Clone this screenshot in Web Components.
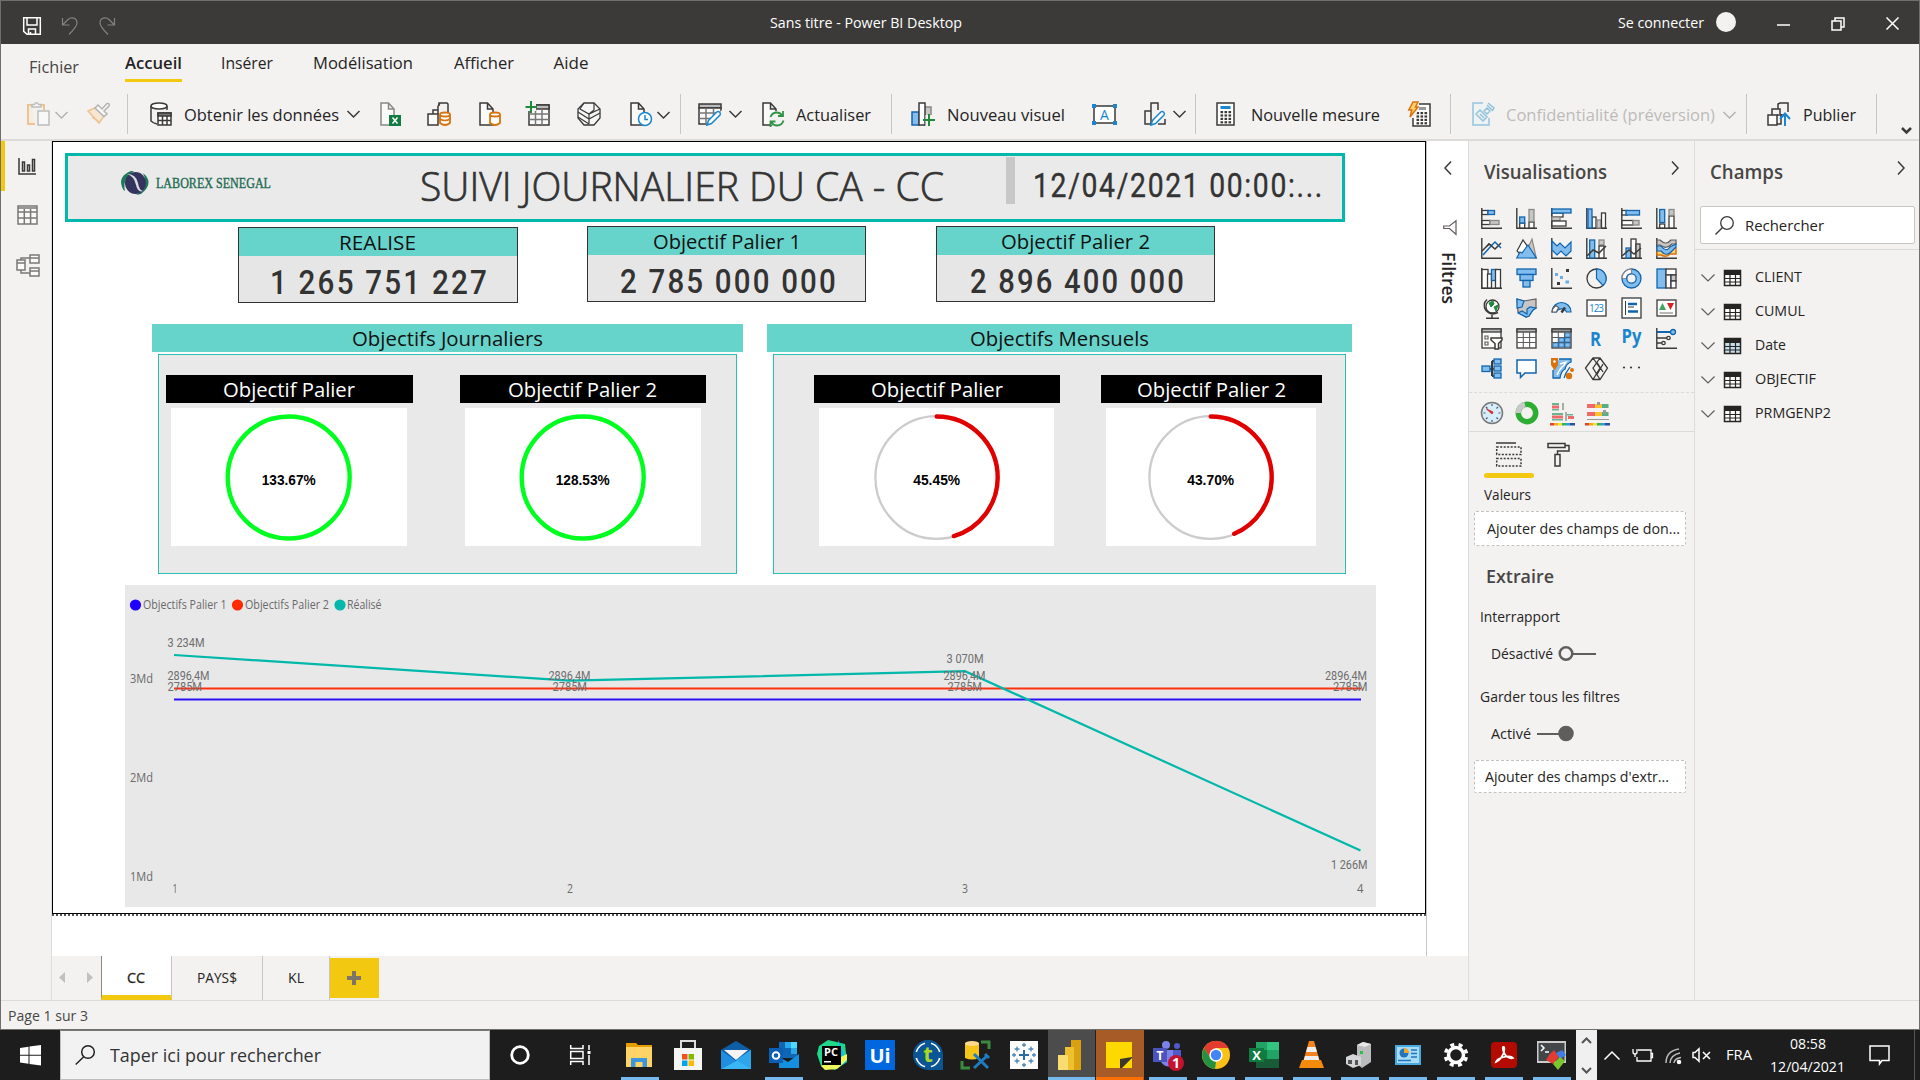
<!DOCTYPE html>
<html lang="fr">
<head>
<meta charset="utf-8">
<title>Sans titre - Power BI Desktop</title>
<style>
html,body{margin:0;padding:0;width:1920px;height:1080px;overflow:hidden;background:#1d1d1d;font-family:"Open Sans","Noto Sans",sans-serif}
body{display:flex;flex-direction:column}
</style>
</head>
<body>
<pbi-window></pbi-window>
<win-taskbar></win-taskbar>
<script>
const D='#3b3a39', B='#83bdee', S='#1065ae', G='#c8c6c4', Y='#f2c811';
const base='<style>*{box-sizing:border-box}svg{display:block;overflow:visible}.row{display:flex;align-items:center}.row>div{flex:none;display:flex}</style>';
function define(name, html, after){
  customElements.define(name, class extends HTMLElement{
    connectedCallback(){
      if(this.shadowRoot) return;
      const root=this.attachShadow({mode:'open'});
      const t=document.createElement('template');
      t.innerHTML=base+(typeof html==='function'?html(this):html);
      root.appendChild(t.content.cloneNode(true));
      if(after) after(this,root);
    }
  });
}
/* Horizontal run of items; gaps are derived from each item's start and width. */
function row(start, items){
  let p=start, s='';
  for(const [x,w,h,dy=0] of items){
    s+=`<div style="margin-left:${(x-p).toFixed(1)}px;width:${w}px;margin-top:${2*dy}px">${h}</div>`;
    p=x+w;
  }
  return `<div class="row">${s}</div>`;
}
const T=(w,s,t,st='')=>`<fit-text w="${w}" style="font-size:${s}px;${st}">${t}</fit-text>`;
const V=(w,h,c,a='')=>`<svg width="${w}" height="${h}" viewBox="0 0 ${w} ${h}" fill="none" stroke="${D}" stroke-width="1.5" ${a}>${c}</svg>`;
const R=(x,y,w,h,f='#fff',s=D)=>`<rect x="${x}" y="${y}" width="${w}" height="${h}" fill="${f}" stroke="${s}"/>`;
const P=(d,s=D,f='none',w=1.5)=>`<path d="${d}" stroke="${s}" fill="${f}" stroke-width="${w}"/>`;
const C=(x,y,r,f='none',s=D)=>`<circle cx="${x}" cy="${y}" r="${r}" fill="${f}" stroke="${s}"/>`;
const TX=(x,y,s,t,f,a='')=>`<text x="${x}" y="${y}" font-size="${s}" fill="${f}" stroke="none" text-anchor="middle" font-family="Open Sans" ${a}>${t}</text>`;
const chev=(c=D,w=1.5)=>V(13,8,P('M.5 1L6.5 7L12.5 1',c,'none',w));
const sep='<div style="width:1px;height:40px;background:#c8c6c4"></div>';

define('fit-text', e=>`<style>:host{display:block;flex:none;line-height:1;white-space:nowrap;width:${e.getAttribute('w')}px}span{display:inline-block;transform-origin:0 50%;line-height:1;vertical-align:top}</style><span><slot></slot></span>`,
 (e,r)=>{const s=r.querySelector('span');const n=s.getBoundingClientRect().width;if(n)s.style.transform=`scaleX(${e.getAttribute('w')/n})`;});

/* ---------- title bar ---------- */
define('pbi-titlebar', ()=>`<style>:host{display:block;height:43px;flex:none;background:#3b3a38;color:#fff}.row{height:43px}</style>`+row(1,[
 [23,18,V(18,18,P('M.7 .7H17.3V17.3H4L.7 14.3Z M4 1V8H14V1 M5.5 17V12H12.5V17 M7.5 15V17','#fff')),3.5],
 [61,18,V(18,18,P('M1.5 1V8H8.5 M1.5 8L7 2.5C10 -.3 16 .5 16 6C16 9 14 11.5 8 17.5','#85827f','none',1.2)),3],
 [98,18,V(18,18,P('M16.5 1V8H9.5 M16.5 8L11 2.5C8 -.3 2 .5 2 6C2 9 4 11.5 10 17.5','#85827f','none',1.2)),3],
 [770,192,T(192,14.5,'Sans titre - Power BI Desktop'),.7],
 [1618,86,T(86,14.5,'Se connecter'),.7],
 [1716,20,V(20,20,'<circle cx="10" cy="10" r="10" fill="#f3f2f1" stroke="none"/>'),-.5],
 [1777,13,V(13,2,P('M0 1H13','#fff')),2],
 [1831,14,V(14,14,P('M1 4H10V13H1Z M4 4V1H13V10H10','#fff')),1.5],
 [1886,13,V(13,13,P('M.5 .5L12.5 12.5M12.5 .5L.5 12.5','#fff')),1]
]));

/* ---------- ribbon ---------- */
const pageIco=(c=D)=>P('M2 1H9.5L15 7V23H2Z M9.5 1V7H15',c,'#fafafa');
const pencil=(x,y)=>`<g transform="translate(${x} ${y})">${P('M0 14L1.5 9.5L10 .8Q11.5 0 12.7 1.2Q14 2.5 13 4L4.5 12.5Z','#1a86d0','#fff',1.5)}</g>`;
const calc=(o=0)=>R(1+o,1,17-o/3,22,'#fff')+`<g stroke="none" fill="${D}">`+[0,1,2,3].map(j=>[0,1,2].map(i=>`<rect x="${4.5+o*.8+i*4}" y="${9+j*3.4}" width="2.6" height="2.2"/>`).join('')).join('')+'</g>';
const ribbonIcons={
 paste:V(23,24,`<g opacity=".5">${P('M5 3H1V22H8','#e8963a','#fbe8d0',2)}${P('M14 3H17V8','#e8963a','none',2)}${P('M5 5V2.5H7.5Q9.5 -1 11.5 2.5H14V5Z','#888','#fff')}${R(11,9,11,14,'#fff','#888')}</g>`),
 brush:V(23,23,`<g opacity=".5">${P('M1 9L8 6L17 14L12 21Z','#e8963a','#fbdcb5')}${P('M5 15L12 20','#e8963a')}${P('M8 6L11 3L15 7L20 1.5Q23 1 22 4L17 9L20 12L17 14.5Z','#777','#fff')}</g>`),
 db:V(23,24,P('M2 4V19Q4 21 8 22 M18 4V8')+`<ellipse cx="10" cy="4" rx="8" ry="3" fill="#fff"/>`+R(9,11,13,12)+`<rect x="9" y="11" width="13" height="3" fill="#777"/>`+P('M9 18.5H22M13.5 14V23M18 14V23')),
 excel:V(22,24,pageIco('#8a8886')+'<rect x="10" y="13" width="12" height="11" fill="#107c41" stroke="none"/>'+P('M13.5 15.5L18.5 21.5M18.5 15.5L13.5 21.5','#fff')),
 cubes:V(25,24,P('M11 12V4M6 12V8H11M12 4V1H20L21 2V10M11 4L13 1')+R(1,12,10,11,'#fafafa')+P('M13 13V21Q18 25 23 21V13','#d9730d','#fff',1.8)+'<ellipse cx="18" cy="12.5" rx="5" ry="2" fill="#fff" stroke="#d9730d" stroke-width="1.8"/>'+P('M13 17Q18 20 23 17','#d9730d')),
 pagedb:V(23,24,pageIco()+P('M12 13V21Q17 25 22 21V13','#d9730d','#fff',1.8)+'<ellipse cx="17" cy="12.5" rx="5" ry="2" fill="#fff" stroke="#d9730d" stroke-width="1.8"/>'),
 tableplus:V(24,24,R(3,3,20,20,'#fafafa')+'<rect x="9" y="3" width="14" height="4" fill="#bbb"/>'+P('M3 12H23M3 17.5H23M9.5 7V23M16 7V23','#777')+'<rect x="-1" y="-2" width="11" height="11" fill="#f3f2f1" stroke="none"/>'+P('M5 -1V11M-.5 5H11','#1f8a3b','none',2)),
 dataverse:V(24,24,P('M7 1H17L23 7V16L17 23H7L1 16V7Z',D,'#f6f6f6',1.3)+P('M7 1L3 7L12 12L23 7M1 10L12 17L23 11M1 15L12 22M12 12V22M17 1V8L12 12','#3b3a39','none',1.2)),
 recent:V(23,24,pageIco()+C(16,17,6.5,'#fff','#1a86d0')+P('M16 13V17.5H19','#1a86d0')),
 transform:V(25,24,R(1,2,22,4,'#bbb')+R(1,6,22,16,'#fafafa')+P('M1 11H23M1 16.5H23M8 6V22M15.5 6V22','#777')+'<path d="M9 23L24 8V24Z" fill="#f3f2f1" stroke="none"/>'+pencil(9,9)),
 refresh:V(24,24,pageIco()+'<circle cx="16" cy="17" r="8" fill="#f3f2f1" stroke="none"/>'+P('M9.5 15Q11 10.5 16 10.5Q19 10.5 21.5 13.5M22 9V14H17M22.5 18.5Q21 23.5 16 23.5Q12.5 23.5 10.5 20.5M9.5 25V19.5H14.5','#2e9444','none',1.8)),
 visual:V(24,24,R(1,10,7,13,B,S)+'<rect x="13" y="5" width="7" height="18" fill="#c8c6c4" stroke="#8a8886"/>'+R(8,1,6,22)+'<rect x="14.500" y="13" width="9.500" height="11" fill="#f3f2f1" stroke="none"/>'+P('M18 12V24M12 18H24','#1f8a3b','none',2)),
 textbox:V(25,21,R(2,2,21,17,'#fff')+`<g fill="#1a86d0" stroke="none"><rect width="4" height="4"/><rect x="21" width="4" height="4"/><rect y="17" width="4" height="4"/><rect x="21" y="17" width="4" height="4"/></g>`+TX(12.5,15.5,14,'A','#1a86d0')),
 shapes:V(24,24,P('M7 9H1V22H7M7 22V1H14V8M14 22H21V17',D,'none')+pencil(7,9)),
 calc:V(19,24,calc()+'<rect x="4.5" y="4" width="10" height="3" fill="#1a86d0" stroke="none"/>'),
 quick:V(23,25,`<g transform="translate(4 1)">${calc(0)}</g><rect x="10" y="5" width="8" height="3" fill="#999" stroke="none"/><path d="M-2 -2H11V7L6 16H-2Z" fill="#f3f2f1" stroke="none"/>`+P('M5 0H10L7.5 5H10L2 15L3.8 8H.8Z','#d9730d','#ffd06b')),
 sens:V(23,24,`<g opacity=".5">${P('M11 1H1V23H17V16','#3a96c8','#e8f3fa')}${P('M4 12L8 8L15 15L11 19ZM8 12L12 16M12 9L15 12L18 9L15 6ZM15 3L21 9M16 1L22 6L20 9','#3a96c8')}</g>`),
 publish:V(24,24,R(1,13,9,10,'#fafafa')+P('M5 13V7H13V12M11 7V2L13 1H21V10M10 13H16M14 12V22H10')+P('M18 24V12M13 17L18 11.5L23 17','#1a86d0','none',2))
};
const ri=ribbonIcons;
define('pbi-ribbon', ()=>`<style>:host{display:block;height:97px;flex:none;background:#f3f2f1;border-bottom:2px solid #dcdbda;color:#252423}
.tabs .row{height:50px;align-items:flex-start;padding-top:10px}.tools .row{height:40px}.on{border-bottom:3px solid ${Y};height:28px}</style>
<div class="tabs">`+row(1,[
 [28.5,50,T(50,17,'Fichier','color:#484644'),2.2],
 [125,57,`<div class="on">${T(57,17,'Accueil','font-weight:600')}</div>`],
 [220.5,52,T(52,17,'Insérer')],[313,100,T(100,17,'Modélisation')],[454,60,T(60,17,'Afficher')],[553.5,35,T(35,17,'Aide')]
])+'</div><div class="tools">'+row(1,[
 [27,23,ri.paste],[55,13,chev('#b5b3b1'),1],[86.5,23,ri.brush,-.5],[127,1,sep],
 [149,23,ri.db],[183.5,155,T(155,17,'Obtenir les données')],[346.5,13,chev()],
 [379,22,ri.excel],[427,25,ri.cubes],[478,23,ri.pagedb],[526,24,ri.tableplus,-.5],[577,23,ri.dataverse],[628.5,23,ri.recent],[656.5,13,chev(),.5],[680,1,sep],
 [698,25,ri.transform],[729,13,chev()],[760.5,24,ri.refresh],[796,75,T(75,17,'Actualiser')],[891,1,sep],
 [911,24,ri.visual],[947,118,T(118,17,'Nouveau visuel')],[1092,25,ri.textbox],[1144,24,ri.shapes],[1172.5,13,chev()],[1195,1,sep],
 [1216,19,ri.calc],[1251,129,T(129,17,'Nouvelle mesure')],[1407.5,23,ri.quick],[1450,1,sep],
 [1472,23,ri.sens],[1506,209,T(209,17,'Confidentialité (préversion)','color:#bdbbb9')],[1723,13,chev('#b5b3b1'),1],[1746,1,sep],
 [1767,24,ri.publish],[1803,53,T(53,17,'Publier')],[1876,1,sep],[1901,11,V(11,7,P('M1 1L5.5 5.5L10 1',D,'none',2.5)),16]
])+'</div>');

/* ---------- left rail ---------- */
define('side-rail', `<style>:host{display:flex;flex-direction:column;width:51px;flex:none;background:#f3f2f1;border-right:1px solid #dedcda}
.on{height:50px;border-left:4px solid ${Y};padding:17px 0 0 13px}.b{padding:14px 0 0 16px;height:49px}</style>
<div class="on">${V(18,17,P('M1 0V16H18M4.5 13V4H6.5V13ZM9.5 13V7H11.5V13ZM14.5 13V1.5H16.5V13Z'))}</div>
<div class="b">${V(21,21,R(1,1,19,18,'#fafafa','#7a7876')+P('M1 3H20M1 7H20M1 13H20M7.3 4V19M13.6 4V19','#7a7876'))}</div>
<div class="b" style="padding-left:15px">${V(24,24,R(1,6,8,10,'#fafafa','#7a7876')+R(14,1,9,8,'#fafafa','#7a7876')+R(14,14,9,8,'#fafafa','#7a7876')+P('M1 9H9M14 4H23M14 17H23M5 6V4H14M5 16V19H14','#7a7876'))}</div>`);

/* ---------- report visuals ---------- */
define('kpi-card', e=>`<style>:host{display:flex;flex-direction:column;border:1px solid #333;background:#e6e6e6}
.h{height:28px;background:#67d4cb;display:flex;justify-content:center;padding-top:5px;color:#111;flex:none}.v{display:flex;justify-content:center;padding:10px 0 0 4px;color:#333;letter-spacing:2.5px}</style>
<div class="h">${T(e.getAttribute('tw'),20,e.getAttribute('label'))}</div><div class="v">${T(e.getAttribute('vw'),33.5,e.getAttribute('value'),'font-family:Roboto;font-weight:500')}</div>`);
define('band-title', e=>`<style>:host{display:flex;justify-content:center;align-items:flex-start;padding-top:${e.getAttribute('pt')||5}px}</style>${T(e.getAttribute('tw'),20,e.getAttribute('label'))}`);
define('ring-gauge', e=>{const p=+e.getAttribute('pct'),full=p>=100,c=full?'#00ff1e':'#e00000';
 return `<style>:host{display:flex;justify-content:center;background:#fff}</style><svg width="130" height="138"><circle cx="64.700" cy="69.5" r="61.300" fill="none" stroke="#ccc" stroke-width="2.3"/><circle cx="64.700" cy="69.5" r="61" fill="none" stroke="${c}" stroke-width="4.4" stroke-linecap="round" pathLength="100" ${full?'':`stroke-dasharray="${p} 200"`} transform="rotate(-90 64.700 69.5)"/><text x="64.700" y="76.7" text-anchor="middle" font-family="Liberation Sans" font-weight="bold" font-size="14" textLength="${e.getAttribute('tw')}" lengthAdjust="spacingAndGlyphs">${e.getAttribute('pct')}%</text></svg>`});
define('company-logo', `<style>:host{display:flex;gap:6px;align-items:center;color:#1e6b52}</style>
<svg width="28" height="24"><path d="M9 0Q-4 5 0 16Q1 19 3 20Q0 8 12 0Z" fill="#1e7a5c"/><path d="M21 2Q33 12 19 23L14 24Q27 15 21 2Z" fill="#1e7a5c"/><ellipse cx="13.500" cy="12" rx="10.5" ry="11" fill="#34345f"/><path d="M5 3Q14 3 16 12Q17 19 21 20Q16 22 14 14Q12 5 5 3Z" fill="#dcdce4"/></svg>${T(115,15.500,'LABOREX SENEGAL','font-family:Liberation Serif;-webkit-text-stroke:.4px #1e6b52')}`);
define('line-chart', ()=>{
 const t=(x,w,y,s,anchor='start',c='#6e6e6e',f='Roboto')=>`<text x="${x-125}" y="${y-585}" textLength="${w}" lengthAdjust="spacingAndGlyphs" fill="${c}" font-family="${f}" font-size="12">${s}</text>`;
 const o=(x,w,y,s)=>t(x,w,y,s,'','#6a6a6a','Open Sans');
 const l=(pts,c)=>`<polyline points="${pts.map(p=>(p[0]-125)+','+(p[1]-585)).join(' ')}" fill="none" stroke="${c}" stroke-width="2.2"/>`;
 const dot=(x,c)=>`<circle cx="${x-125}" cy="20" r="5.6" fill="${c}"/>`;
 return `<style>:host{display:block;background:#e8e8e8}</style><svg width="1252" height="322">
 ${dot(135.5,'#1f00ff')}${o(143,83.5,609,'Objectifs Palier 1')}${dot(237.5,'#ff2a00')}${o(245,84,609,'Objectifs Palier 2')}${dot(340,'#01b8aa')}${o(347,34.5,609,'Réalisé')}
 ${o(130,23,683,'3Md')}${o(130,23,782,'2Md')}${o(130,23,881,'1Md')}
 ${o(172.5,5,893,'1')}${o(567,6,893,'2')}${o(962,6,893,'3')}${o(1357,6.5,893,'4')}
 ${l([[174,699.5],[1361,699.5]],'#2a10f5')}${l([[174,688.5],[1361,688.5]],'#ff3010')}${l([[174,655],[570,680.7],[965,671.2],[1360.5,850.5]],'#01b8aa')}
 ${t(167.5,37,647,'3 234M')}${t(946.5,37,663,'3 070M')}${t(1331,36.5,869,'1 266M')}
 ${[[167.5,167.5],[548.5,552.5],[943.5,947.5],[1325,1333]].map(([a,b])=>t(a,42,680,'2896,4M')+t(b,34.5,691,'2785M')).join('')}</svg>`});
define('report-canvas', ()=>{
 const v=(tag,x,y,w,h,a='',st='',inner='')=>`<${tag} class="v" style="left:${x-52}px;top:${y-141}px;width:${w}px;height:${h}px;${st}" ${a}>${inner}</${tag}>`;
 const tl='background:#67d4cb;color:#111',bk='background:#000;color:#fff',bx='background:#e9e9e9;border:1.5px solid #2bbfb3';
 return `<style>:host{display:block;width:1375px;background:#fff;flex:none;border-right:1px solid #c8c6c4}
 .page{position:relative;width:1374px;height:773px;border:1px solid #000;border-right-width:1.5px}.page .v{position:absolute;margin:-1px 0 0 -1px}
 .dots{height:2px;width:1374px;background:repeating-linear-gradient(90deg,#555 0 2px,#fff 2px 4px)}</style><div class="page">`+
 v('div',65,153,1280,69,'','background:#eaeaea;border:3px solid #01b8aa')+
 v('company-logo',122,170.5,160,24)+
 v('div',420,165.5,525,42,'','color:#333',T(524,40.5,'SUIVI JOURNALIER DU CA - CC','font-weight:300;-webkit-text-stroke:.7px #333'))+
 v('div',1006,157,9,46.5,'','background:#c8c8c8')+
 v('div',1033,168.5,292,40,'','color:#333;letter-spacing:2px',T(291,33.5,'12/04/2021 00:00:...','font-family:Roboto;-webkit-text-stroke:.4px #333'))+
 v('kpi-card',238,227,279.5,76,'label="REALISE" tw="77" value="1 265 751 227" vw="219"')+
 v('kpi-card',587,226,279,75.5,'label="Objectif Palier 1" tw="148" value="2 785 000 000" vw="218"')+
 v('kpi-card',936,226,279,75.5,'label="Objectif Palier 2" tw="149" value="2 896 400 000" vw="216"')+
 v('band-title',152,324,590.5,28,'label="Objectifs Journaliers" tw="191"',tl)+
 v('band-title',767,324,585,28,'label="Objectifs Mensuels" tw="179"',tl)+
 v('div',158,354,579,220,'',bx)+v('div',773,354,573,220,'',bx)+
 v('band-title',166,375,246.5,28,'label="Objectif Palier" tw="132"',bk)+
 v('band-title',459.5,375,246.5,28,'label="Objectif Palier 2" tw="149"',bk)+
 v('band-title',813.5,375,246,28,'label="Objectif Palier" tw="132"',bk)+
 v('band-title',1101,375,221,28,'label="Objectif Palier 2" tw="149"',bk)+
 v('ring-gauge',171,408,236,138,'pct="133.67" tw="54"')+
 v('ring-gauge',465,408,235.5,138,'pct="128.53" tw="54"')+
 v('ring-gauge',819,408,235,138,'pct="45.45" tw="47"')+
 v('ring-gauge',1106,408,210,138,'pct="43.70" tw="47"')+
 v('line-chart',124.5,585,1251.5,322)+'</div><div class="dots"></div>'});

define('filter-pane', `<style>:host{display:flex;flex-direction:column;width:41px;background:#fff;flex:none}</style>
<div style="padding:20px 0 0 17px">${V(8,14,P('M7 .5L1 7L7 13.5'))}</div>
<div style="padding:45px 0 0 16px">${V(14,15,P('M13 .7V14.3L6.5 8.5H.7V6H6.5Z','#605e5c','none',1.2))}</div>
<div style="padding:16px 0 0 12px"><svg width="20" height="54"><text transform="translate(3 1) rotate(90)" font-family="Open Sans" font-weight="600" font-size="18" fill="#252423" textLength="52" lengthAdjust="spacingAndGlyphs">Filtres</text></svg></div>`);

/* ---------- visualisation pane ---------- */
const AX=P('M.8 0V20.2H21',D,'none',1.4), W='#fff';
const gridT=(f,h)=>R(1,1,19,19,f)+`<rect x="1" y="1" width="19" height="3" fill="${h}"/>`+P('M1 9.5H20M1 14.5H20M7.3 4V20M13.6 4V20','#605e5c','none',1.1);
const viz=[
 AX+R(1,2.5,6,4)+R(7,2.5,6.5,4,B,S)+R(1,12.5,8,4)+R(9,12.5,9,4,G,'#8a8886'),
 AX+R(3.7,15,5,5)+R(3.7,9,5,6,B,S)+R(13,14,5,6)+R(13,1.5,5,12,G,'#8a8886'),
 AX+R(1,5,11,4)+R(1,9,8,4,G,'#8a8886')+R(1,13,14,5)+R(1,1,19,4,B,S),
 AX+R(6,9,4,11)+R(11,12,4,8,G,'#8a8886')+R(15.5,5,4,15)+R(2,1,4,19,B,S),
 AX+R(1,2.5,5,4.5)+R(5,2.5,13.5,4.5,B,S)+R(1,12.5,11,4.5)+R(12,12.5,6,4.5,G,'#8a8886'),
 AX+R(3.7,16,5,4)+R(3.7,1.5,5,13,B,S)+R(13,8,5,12)+R(13,1.5,5,6,G,'#8a8886'),
 AX+P('M1 13L8 6L14 11L20 5')+P('M2 17L11 7L14 4L20 10',S)+P('M6 8L8 6L11 8'),
 P('M10 14L16 1L20.3 20H14Z','#8a8886',G,1.2)+P('M1 13L7 2L12 9L5 17Z','#3b3a39','#fff',1.2)+P('M.7 20L4 14L6 15L12 7L20.3 20Z',S,B,1.2),
 AX+P('M1 3L6 8L9 5L14 10L20 4V13L15 18L10 13L6 17L1 12Z',S,B,1.2),
 AX+R(3.7,2,5,18,B,S)+R(13,2,5,5,G,'#8a8886')+R(13,8,5,12)+P('M1 18L7 12L13 15L20 8'),
 AX+R(5,10,5,10,B,S)+R(10,1,5,19)+R(15,6,4,14,G)+P('M1 18L8 12L13 16L20 10'),
 AX+P('M1 10H5Q10 17 14 10H20V16H14Q10 20 5 17H1Z','#d9730d','#ffd06b')+P('M1 2H4Q10 8 15 2H20V6H16Q10 12 4 7H1Z','#605e5c',G,1.2)+P('M1 8H5Q10 15 14 9L20 6V9L15 14Q10 19 5 13H1Z',S,B,1.2),
 AX+R(1,1.5,6,18.5)+R(6.5,6,4,14)+R(10.5,1.5,5,11,B,S)+R(14.5,1.5,5,18.5),
 R(1,1,19,5.5,B,S)+R(4,6.5,13,6,B,S)+R(7,12.5,7,6.5,B,S),
 AX+`<g stroke="none"><path d="M15 1H18V4H15ZM6 14H9V17H6Z" fill="${D}"/><path d="M4 5H7V8H4ZM9 8H12V11H9ZM14.500 12.500H18V15.500H14.500Z" fill="#69ade4"/></g>`,
 C(10.5,10.5,9.5)+P('M10.5 1V10.5L17 17.5A9.5 9.500 0 0 0 10.500 1Z',S,B,1.2),
 C(10.5,10.5,9.5,B,S)+P('M1 10.500A9.500 9.500 0 0 1 10.500 1V5.500A5 5 0 0 0 5.500 10.500Z','#8a8886','#fff',1.2)+C(10.5,10.5,4.7,'#f3f2f1',S),
 R(1,1,9,19,B,S)+R(10,1,10,6)+R(10,7,5,13)+R(15,7,5,6,G)+R(15,13,5,7),
 C(11.5,8.5,6.500,'#fff')+P('M6 1.500Q1 6 5 12.500Q10 18 17 14.500M11 17V20M5 20.300H18')+P('M8 5L12 3L13 6L10 9ZM13 9L17 7L15 13Z','#1f8a3b','#1f8a3b',1),
 P('M1 1L8 3L20 1V10L17 12L13 18L10 19L2 14Z','#605e5c',G,1.2)+P('M1 1L8 3L6 9L1 10ZM11 11L14 9L20 10L17 12L13 18L10 19L2 15L6 13L11 16Z',S,B,1.2),
 P('M1 14A9.500 9.500 0 0 1 20 14H15.500A5.500 5.500 0 0 0 5.500 14Z',S,B,1.2)+P('M1 14A9 9 0 0 1 5 7.500L8 10Q6 11 5.500 14Z','#605e5c','#fff',1.2)+P('M10.500 14.500L14 9.500',D,'none',2.500),
 R(1,2,19,16)+TX(10.5,13.800,10,'123','#1a86d0','textLength="15"'),
 R(1,0,19,20)+P('M7 6H16M7 13.500H17',S,'none',2.500)+P('M4.500 3V17M7 9H13',D,'none',1),
 R(1,2,19,16)+'<g stroke="none"><path d="M3 12L6.500 5L10 12Z" fill="#3fa55f"/><path d="M11 5H18L14.500 12Z" fill="#d2232a"/></g>'+P('M3.500 15H17','#8a8886','none',1.200),
 R(1,1,19,19,'#fafafa')+`<rect x="1" y="1" width="19" height="3" fill="#bbb"/>`+P('M4 8H7V11H4ZM4 14H7V17H4Z','#605e5c','none',1.2)+P('M10 10H21V12L17.500 15.500V21H14V15.500L10 12Z',D,'#fff'),
 gridT('#fff','#bbb'), gridT('#fff','#999')+`<path d="M14 5H19V9H14ZM8 10H13V14H8ZM14 10H19V14H14ZM2 15H7V19H2ZM8 15H13V19H8ZM14 15H19V19H14Z" fill="${B}" stroke="${S}" stroke-width=".6"/>`,
 TX(9.5,17.500,20,'R','#1a86d0','font-weight="bold" textLength="11" lengthAdjust="spacingAndGlyphs"'),
 TX(10.500,15,19,'Py','#1a86d0','font-weight="bold" textLength="20" lengthAdjust="spacingAndGlyphs"'),
 AX+P('M1 4H14',S,'none',2)+P('M1 10H11M1 15H6')+C(17,4,2.500,B,S)+C(12.500,10,1.700,'#f3f2f1')+C(7.500,15,1.700,'#f3f2f1'),
 P('M9 11H13M11 3V18M11 3H14M11 18H14',D,'none',2)+R(1,8,8,5.500,B,S)+R(13,1,7,5,B,S)+R(13,8,7,5,B,S)+R(13,15,7,5,B,S),
 P('M1 2H20V15H9L4.500 19.500V15H1Z',S,'#fff'),
 P('M8 1H20V4Q15 6 14 11Q10 13 9 20H2V12M13 20L15 15L19 9',S,B,1.3)+P('M9 6L15 4Q13 8 11 9Q8 12 6 17','#fff','none',1.6)+`<path d="M0 0H7V7L3.500 12.500L0 7Z" fill="#d9730d" stroke="none"/><circle cx="3.500" cy="3.500" r="1.300" fill="#fff" stroke="none"/><circle cx="18" cy="18" r="3.200" fill="#d9730d" stroke="none"/><circle cx="21" cy="12" r="2" fill="#d9730d" stroke="none"/>`,
 P('M7 0H14L21.500 10L14 21.500H7L-.5 10ZM7 0L14 10L7 21.500M14 0L7 10L14 21.500M11 4.500L17 14M11 16.500L17 6',D,'none',1.300),
 `<g stroke="none" fill="${D}"><circle cx="3" cy="9.500" r="1.100"/><circle cx="10" cy="9.500" r="1.100"/><circle cx="18" cy="9.500" r="1.100"/></g>`
];
const rb='<g stroke="none"><path d="M-1 22H3V24.500H-1Z" fill="#e8412c"/><path d="M3 22H7V24.500H3Z" fill="#f5a623"/><path d="M7 22H11V24.500H7Z" fill="#f2e030"/><path d="M11 22H15V24.500H11Z" fill="#35b24a"/><path d="M15 22H19V24.500H15Z" fill="#2b9fd8"/><path d="M19 22H24V24.500H19Z" fill="#2c4ea3"/></g>';
const custom=[
 C(11,12,10.500,'#d6eefb','#777')+P('M11 3V5M11 19V21M2.500 12H4.500M17.500 12H19.500M5 6L6.500 7.500M17 6L15.500 7.500M5 18L6.500 16.500M17 18L15.500 16.500','#556','none',1.2)+P('M5.500 8L12 11L11 13Z','#d2332a','#d2332a',1),
 `<circle cx="11" cy="12" r="8.700" stroke="#2ead33" stroke-width="5.500"/><path d="M2.300 12A8.700 8.700 0 0 1 9 3.500" stroke="#c9c9c9" stroke-width="5.500"/>`,
 rb+'<g stroke="none"><path d="M1 2H8V4H1ZM1 8H8V9.500H1ZM1 12H12V14H1ZM1 18H12V19.500H1ZM14 13H22V14.500H14Z" fill="#69b592"/><path d="M1 4.500H8V7.500H1ZM1 14.500H12V17.500H1ZM17 15H23V18H17Z" fill="#f0696a"/><path d="M11 2H13V9H11ZM14 11H16V20H14Z" fill="#aaa"/></g>',
 rb+'<g stroke="none"><path d="M1 3H9V7H1ZM1 11H9V15H1Z" fill="#f0696a"/><path d="M9 3H16V7H9ZM9 11H16V15H9Z" fill="#f9c22e"/><path d="M16 3H22.500V7H16ZM16 11H22.500V15H16Z" fill="#56ae84"/><path d="M11 1H14V4H11ZM17 9H20V13H17ZM1 18H23V19H1Z" fill="#999"/></g>'
];
define('viz-pane', ()=>`<style>:host{display:block;width:226px;flex:none;background:#f3f2f1;border-left:1px solid #dedcda;color:#252423}
.hd{height:67px;display:flex;justify-content:space-between;padding:22px 15px 0 15px;color:#484644}
.g{display:grid;grid-template-columns:repeat(6,35px);grid-auto-rows:30px;padding-left:12px;height:185px;border-bottom:1px dashed #dcdad8}.g svg{stroke-width:1.3}
.c{display:flex;gap:13px;padding:8px 0 0 12px;height:39px;border-bottom:1px solid #dcdad8}
.t{display:flex;padding:10px 0 0 27px;height:41px}.u{width:50px;height:5px;border-radius:2.5px;background:${Y};margin-left:15px}
.box{height:35px;width:212px;margin-left:5px;border:1px dashed #c4c2c0;background:#fff;border-radius:2px;padding:9.5px 0 0 12px}.l{margin-left:11px}
.tg{display:flex;margin-left:22px;height:15px;gap:6px}.tg fit-text{margin-top:.7px}</style>
<div class="hd">${T(123,19,'Visualisations','font-weight:600')}<div style="margin-top:-2px">${V(8,14,P('M1 .5L7 7L1 13.5'))}</div></div>
<div class="g">${viz.map(i=>V(21,21,i).replace('stroke-width="1.5"','stroke-width="1.3"')).join('')}</div><div class="c">${custom.map(i=>V(22,24,i)).join('')}</div>
<div class="t">${V(26,25,P('M0 1H20')+P('M.7 5H25V12.500H.7ZM.7 16.500H25V24H.7Z').replace('<path','<path stroke-dasharray="2 1.500"'))}<div style="margin-left:25px">${V(23,25,P('M1 1.500H18V5.500H1ZM18 3.500H22V9H10.500V12.500M8 12.500H13V24H8Z'))}</div></div><div class="u"></div>
<div style="padding:9.500px 0 0 15px;height:33px">${T(47,14.5,'Valeurs')}</div>
<div class="box">${T(193,14.5,'Ajouter des champs de don...')}</div>
<div style="padding:21px 0 0 17px;height:62px;color:#484644">${T(68,18.5,'Extraire','font-weight:600')}</div>
<div class="l" style="height:38px;padding-top:2px">${T(80,14.5,'Interrapport')}</div>
<div class="tg">${T(62,14.5,'Désactivé')}${V(38,15,C(7,7.5,6.3,'none','#605e5c').replace('/>',' stroke-width="2.500"/>')+P('M14 8H37','#605e5c','none',2))}</div>
<div class="l" style="height:65px;padding-top:29px">${T(140,14.5,'Garder tous les filtres')}</div>
<div class="tg">${T(40,14.5,'Activé')}${V(38,15,C(29,7.5,7,'#605e5c','#605e5c')+P('M0 8H22','#605e5c','none',2))}</div>
<div class="box" style="height:33px;margin-top:19px;padding:8.5px 0 0 10px">${T(184,14.5,"Ajouter des champs d'extr...")}</div>`);

/* ---------- fields pane ---------- */
const fld=(n,w,f='#fff')=>`<div class="f">${V(14,8,P('M.5 .5L7 7L13.500 .5','#605e5c','none',1.200),'style="margin-top:2px"')}${V(17,16,`<rect x=".5" y=".5" width="16" height="15" fill="${f}" stroke="#252423"/><rect width="17" height="5" fill="#252423" stroke="none"/>`+P('M0 8.500H17M0 12H17M6 5V16M11.500 5V16','#252423','none',1.200),'style="margin:1px 14px 0 9px"')}${T(w,14.800,n)}</div>`;
define('fields-pane', ()=>`<style>:host{display:block;flex:1;background:#f3f2f1;border-left:1px solid #dedcda;color:#252423}
.hd{height:65px;display:flex;justify-content:space-between;padding:22px 14px 0 15px;color:#484644}
.s{display:flex;align-items:center;height:38px;width:215px;margin-left:5px;border:1px solid #c8c6c4;border-radius:2px;background:#fff;padding-left:14px;gap:11px}
.list{border-top:1px solid #dcdad8;margin-top:5px;padding-top:10px}.f{display:flex;align-items:center;height:34px;padding-left:5.5px}.f fit-text{margin-top:-2px}</style>
<div class="hd">${T(73,19,'Champs','font-weight:600')}<div style="margin-top:-2px">${V(8,14,P('M1 .5L7 7L1 13.5'))}</div></div>
<div class="s">${V(19,19,C(12,7,6.300).replace('/>',' stroke-width="1.300"/>')+P('M7.500 11.500L.5 18.500'))}${T(79,14.800,'Rechercher')}</div>
<div class="list">${fld('CLIENT',47)}${fld('CUMUL',50)}${fld('Date',31,'#c5ddea')}${fld('OBJECTIF',61)}${fld('PRMGENP2',76)}</div>`);

/* ---------- page tabs / status ---------- */
define('page-tabs', ()=>`<style>:host{display:block;height:44px;background:#f3f2f1;flex:none;color:#252423}.row{height:44px;align-items:center}
.tab{height:44px;width:100%;border-right:1px solid #c8c6c4;display:flex;justify-content:center;padding-top:15px}.on{background:#fff;border-bottom:5px solid ${Y};border-left:1px solid #8a8886}
.add{width:49.500px;height:40px;background:${Y};display:flex;align-items:center;justify-content:center}</style>`+row(52,[
 [59,6,V(6,11,'<path d="M6 0V11L0 5.500Z" fill="#c2c0be" stroke="none"/>'),-.5],[87,6,V(6,11,'<path d="M0 0V11L6 5.500Z" fill="#c2c0be" stroke="none"/>'),-.5],
 [101,70.5,`<div class="tab on">${T(18,14.5,'CC','-webkit-text-stroke:.3px')}</div>`],[171.5,91,`<div class="tab">${T(40,14.5,'PAYS$')}</div>`],[262.5,67,`<div class="tab">${T(16,14.5,'KL')}</div>`],
 [329.5,49.5,`<div class="add">${V(14,14,P('M7 0V14M0 7H14','#7a7568','none',4))}</div>`]]));
define('status-bar', `<style>:host{display:block;height:29px;flex:none;border-top:1px solid #dedcda;background:#f3f2f1;color:#484644;padding:7.5px 0 0 7px}</style>${T(80,14.5,'Page 1 sur 3')}`);

define('pbi-window', `<style>:host{display:flex;flex-direction:column;width:1920px;height:1030px;flex:none;box-sizing:border-box;border:1px solid #6f6f6d;background:#f3f2f1}
.body{display:flex;height:859px;flex:none}.main{display:flex;flex-direction:column;width:1416px;flex:none}.up{display:flex;height:815px;flex:none}</style>
<pbi-titlebar></pbi-titlebar><pbi-ribbon></pbi-ribbon><div class="body"><side-rail></side-rail><div class="main"><div class="up"><report-canvas></report-canvas><filter-pane></filter-pane></div><page-tabs></page-tabs></div><viz-pane></viz-pane><fields-pane></fields-pane></div><status-bar></status-bar>`);

/* ---------- taskbar ---------- */
const F=(d,f)=>`<path d="${d}" fill="${f}" stroke="none"/>`;
const apps=[
 [F('M1 3H11L13 5H27V10H1Z','#e59e00')+F('M1 7H27V27H1Z','#ffd368')+F('M6 27V18H22V27H17.500V22H10.500V27Z','#3a96dd'),'u'],
 [F('M7 8V0H23V8H21V2H9V8Z','#ddd')+F('M1 8H29V30H1Z','#f5f5f5')+F('M9 14H14.500V19.500H9Z','#f25022')+F('M15.500 14H21V19.500H15.500Z','#7fba00')+F('M9 20.500H14.500V26H9Z','#00a4ef')+F('M15.500 20.500H21V26H15.500Z','#ffb900'),''],
 [F('M0 10L15 1L30 10V29H0Z','#0f5ea8')+F('M3 10H27L15 20Z','#f4f4f4')+F('M0 10L15 21L0 29Z','#1f8ee0')+F('M30 10L15 21L0 29H30Z','#39b6f3')+F('M30 10V29L15 20Z','#2fa5ec'),''],
 [F('M10 2H28V18H10Z','#1066b5')+F('M16 2H22V8H16Z','#28a8ea')+F('M22 2H28V8H22Z','#50d9ff')+F('M22 8H28V14H22Z','#28a8ea')+F('M10 17L19 22L30 14V28H10Z','#1490df')+F('M0 8H14V23H0Z','#0a5fb5')+C(7,15.500,3.300,'none','#fff').replace('/>',' stroke-width="2"/>'),'u'],
 [F('M2 6L11 0L28 4L30 22L18 30L4 26L0 14Z','#21d789')+F('M21 0L24 6L30 22L24 25Z','#07c3f2')+F('M4 26L8 30L20 29L30 20V14Z','#eef85a')+F('M5 6H24V25H5Z','#000')+TX(14,16,11,'PC','#fff','font-weight="bold"')+F('M7 21H14V22.500H7Z','#fff'),''],
 [F('M0 0H30V30H0Z','#0067df')+TX(15,22.500,20,'Ui','#fff','font-weight="bold"'),''],
 [F('M15 0A15 15 0 1 0 15 30H30V15A15 15 0 0 0 15 0Z','#0a5596')+C(15,15,12,'none','#fff')+F('M12 2H18V5H12ZM1.500 12H4V18H1.500ZM26 12H28.500V18H26ZM12 26H18V29H12Z','#0a5596')+TX(15,22,22,'t','#a8d820','font-weight="bold"'),''],
 [F('M4 3H18V18Q11 21 4 18Z','#f5c518')+'<ellipse cx="11" cy="3.500" rx="7" ry="2.500" fill="#ffd98c" stroke="none"/>'+P('M20 2H28V9M1 21V28H9','#3c8a3f','none',3)+P('M13 14L27 28M27 15L13 28M24 14L28 18','#1f7cc0','none',3),''],
 [F('M1 1H29V29H1Z','#fff')+P('M15 10V20M10 15H20','#2b6ca3','none',2)+P('M8 6.500V11.500M5.500 9H10.500M22 6.500V11.500M19.500 9H24.500M8 18.500V23.500M5.500 21H10.500M22 18.500V23.500M19.500 21H24.500M15 3V7M13 5H17M15 23V27M13 25H17M5 13V17M3 15H7M25 13V17M23 15H27','#4c86b5','none',1.300),''],
 [F('M14 0H24V30H14Z','#d9a010')+F('M8 7H17V30H8Z','#efc030')+F('M1 15H11V30H1Z','#f8dc70'),'a'],
 [F('M1 2H27V28H1Z','#ffd800')+F('M15 28V19L27 17V18L17 28Z','#3a3730'),'o'],
 [C(13,5,4,'#7b83eb','none')+C(24,6,3,'#5059c9','none')+F('M8 10H22V24Q14 30 8 22Z','#7b83eb')+F('M20 10H28V18Q26 22 20 21Z','#5059c9')+F('M0 8H14V22H0Z','#4b53bc')+TX(7,19.500,12,'T','#fff','font-weight="bold"')+C(23,23,8,'#c4122f','none')+TX(23,28,14,'1','#fff','font-weight="bold"'),'u'],
 [C(15,15,14,'#fbc116','none')+F('M3 8A14 14 0 0 1 27.500 8H15L9 18Z','#e33b2e')+F('M3 8L10 19L15 22L14 29A14 14 0 0 1 3 8Z','#229342')+C(15,15,6.700,'#fff','none')+C(15,15,5.200,'#4285f4','none'),'u'],
 [F('M7 2H30V28H7Z','#21a366')+F('M18 2H30V10H18Z','#33c481')+F('M7 10H18V19H7Z','#107c41')+F('M18 19H30V28H7V19Z','#185c37')+F('M0 8H15V22H0Z','#107c41')+TX(7.500,20,13,'X','#fff','font-weight="bold"'),'u'],
 [F('M12 1H17L23 22H6Z','#f58220')+F('M10.500 7H18.500L20 12H9Z','#eee')+F('M8 16H21L22.500 21H6.500Z','#eee')+F('M5 20H24L27 28H2Z','#f58b0a'),'u'],
 [F('M12 5L18 2L26 4V22L17 28L12 24Z','#b9bbbd')+F('M12 5L18 2L26 4L20 7Z','#e8e8e8')+F('M1 17L8 14L16 17V25L8 28L1 24Z','#d5d6d8')+F('M3 20H7V24H3ZM10 20H13V25H10Z','#555')+F('M15 11H18V14H15Z','#27c24a'),'u'],
 [F('M2 5H28V25H2Z','#4aa9e0')+F('M4 7H26V23H4Z','#a9dcf7')+C(11,13,4.500,'#2176bd','none')+F('M11 13V8A5 5 0 0 1 16 13Z','#f5a623')+P('M18 10H24M18 13.500H24M18 17H24M5 20.500H18','#2176bd','none',1.500),'u'],
 [C(15,15,7.500,'none','#fff').replace('/>',' stroke-width="3.500"/>')+'<circle cx="15" cy="15" r="10.500" fill="none" stroke="#fff" stroke-width="3.500" stroke-dasharray="4 4.250" transform="rotate(12 15 15)"/>','u'],
 [`<rect x="2" y="2" width="26" height="26" rx="4" fill="#b30b00" stroke="none"/>`+P('M7 22Q12 20 15 12Q16 6 14 7Q13 10 17 16Q21 19 24 18Q22 15 13 17.500Q8 19 7 22Z','#fff','none',1.800),'u'],
 [F('M0 1H29V23H0Z','#ccc')+F('M1.500 3H27.500V21H1.500Z','#44474a')+P('M4 5L7 8L4 11M8 12H12','#fff')+F('M12 15L17 10L22 17L16 24L9 20Z','#e03c31')+F('M19 13L25 10L29 15L23 19Z','#3f7ee8')+F('M16 24L23 17L28 21L21 30Z','#7bc62d'),'u']
];
define('win-taskbar', ()=>`<style>:host{display:flex;height:50px;width:1920px;background:#1d1d1d;color:#fff;flex:none}
.st{width:60px;padding:15px 0 0 20px}.se{width:430px;height:50px;background:#f2f2f2;border:1px solid #bdbdbd;border-top-color:#777;display:flex;align-items:center;padding-left:14px;gap:15px;color:#333}
.sm{width:48px;display:flex;align-items:center;justify-content:center}.app{width:48px;height:50px;padding:10px 0 0 9px;position:relative}
.bar{position:absolute;bottom:0;left:5px;width:38px;height:3px;background:#76b9ed}.a{background:#4c4c4c;border-right:1px solid #222}.a .bar,.o .bar{left:0;width:47px}.o{background:#a75c27}.o .bar{background:#ff6f00}
.sc{width:21px;background:#f0f0f0;display:flex;flex-direction:column;justify-content:space-between;padding:7px 5px 6px}.tray{display:flex}.tray .row{height:50px}</style>
<div class="st">${V(21,21,F('M0 3L8.500 1.800V9.800H0ZM9.500 1.600L21 0V9.800H9.500ZM0 10.800H8.500V18.800L0 17.600ZM9.500 10.800H21V20.500L9.500 19Z','#fff'))}</div>
<div class="se">${V(20,20,C(13,7,6.300,'none','#222')+P('M8.500 12L.7 19.500','#222'))}${T(211,18.500,'Taper ici pour rechercher')}</div>
<div class="sm" style="width:60px">${V(20,20,C(10,10,8.300,'none','#fff').replace('/>',' stroke-width="2.800"/>'))}</div>
<div class="sm" style="width:60px">${V(21,20,P('M.7 0V3.500H13V0M.7 20V16.500H13V20M.7 6.500H13V13.500H.7ZM19 0V5M19 10V20','#fff')+F('M17.500 6H20.500V9H17.500Z','#fff'))}</div>
<div style="width:5.500px"></div>${apps.map(a=>`<div class="app ${a[1]}">${V(30,30,a[0])}${a[1]?'<div class="bar"></div>':''}</div>`).join('')}
<div class="sc">${V(11,7,P('M1 6L5.500 1.500L10 6','#555','none',2))}${V(11,7,P('M1 1L5.500 5.500L10 1','#555','none',2))}</div>
<div class="tray">`+row(1596.5,[
 [1604,16,V(16,9,P('M.5 8.500L8 1L15.500 8.500','#fff'))],
 [1632,21,V(21,14,P('M6 2H19V13H5V9M19 5.500H20.500V9.500H19M1 1V4Q1 6 3 6Q5 6 5 4V1M3 6V9','#fff','none',1.300))],
 [1665,17,V(17,16,P('M1 15Q1 3 14 1M5 15Q5.500 7 15 5M9 15Q9.500 10.500 16 9.500','#bbb')+C(14,14,1.500,'#fff','#fff')),1],
 [1691.5,19,V(19,14,P('M1 4.500H3L7 .7V13.300L3 9.500H1Z','#fff')+P('M11 4L18 11M18 4L11 11','#fff'))],
 [1726,26,T(26,14.500,'FRA'),.5],
 [1770,75,`<div style="display:flex;flex-direction:column;align-items:center;gap:8.500px">${T(36,14.500,'08:58')}${T(75,14.500,'12/04/2021')}</div>`,.6],
 [1868.5,21,V(21,20,P('M1 1H20V15.500H13L10.500 19V15.500H1Z','#fff'))],
 [1914,1,'<div style="width:1px;height:50px;background:#555"></div>']
])+'</div>');
</script>
</body>
</html>
